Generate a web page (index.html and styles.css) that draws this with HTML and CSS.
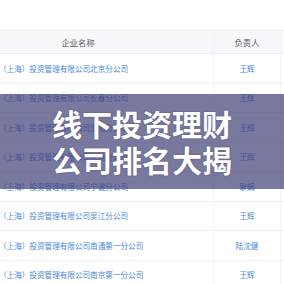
FILE: index.html
```html
<!DOCTYPE html>
<html lang="zh">
<head>
    <meta charset="UTF-8">
    <meta name="viewport" content="width=device-width, initial-scale=1.0">
    <title>线下投资理财公司排名大揭</title>
    <link rel="stylesheet" href="styles.css">
</head>
<body>
    <div class="page">
        <div class="toolbar"></div>
        <table class="list">
            <thead>
                <tr>
                    <th class="col-name">企业名称</th>
                    <th class="col-owner">负责人</th>
                    <th class="col-extra"></th>
                </tr>
            </thead>
            <tbody>
                <tr><td class="name">（上海）投资管理有限公司北京分公司</td><td class="owner">王辉</td><td></td></tr>
                <tr><td class="name">（上海）投资管理有限公司长春分公司</td><td class="owner">王辉</td><td></td></tr>
                <tr><td class="name">（上海）投资管理有限公司沈阳分公司</td><td class="owner">王辉</td><td></td></tr>
                <tr><td class="name">（上海）投资管理有限公司大连分公司</td><td class="owner">王辉</td><td></td></tr>
                <tr><td class="name">（上海）投资管理有限公司宁波分公司</td><td class="owner">耿娟</td><td></td></tr>
                <tr><td class="name">（上海）投资管理有限公司吴江分公司</td><td class="owner">王辉</td><td></td></tr>
                <tr><td class="name">（上海）投资管理有限公司南通第一分公司</td><td class="owner">陆沈健</td><td></td></tr>
                <tr><td class="name">（上海）投资管理有限公司南京第一分公司</td><td class="owner">王辉</td><td></td></tr>
            </tbody>
        </table>

        <!-- title banner over the list -->
        <div class="banner">
            <h1>线下投资理财<br>公司排名大揭</h1>
        </div>
    </div>
</body>
</html>
```

FILE: styles.css
```css
body {
    margin: 0;
    background-color: #fff;
    font-family: "Noto Sans CJK SC", "Noto Sans", sans-serif;
    overflow: hidden;
}
.page {
    position: relative;
    width: 284px;
    height: 284px;
    overflow: hidden;
}
.toolbar {
    height: 30px;
    border-bottom: 1px solid #eef0f4;
}
.list {
    margin-left: -57px;
    border-collapse: collapse;
    table-layout: fixed;
    width: 400px;
    font-size: 7.6px;
}
.col-name {
    width: 270px;
}
.col-owner {
    width: 66px;
}
th, td {
    border-bottom: 1px solid #edf0f5;
    border-right: 1px solid #f1f3f7;
    padding: 0;
    text-align: center;
    white-space: nowrap;
}
th {
    height: 22px;
    background-color: #f6f8fb;
    color: #555a63;
    font-size: 8.3px;
    font-weight: normal;
}
td {
    height: 28.5px;
}
td.name {
    text-align: left;
    padding-left: 56px;
    color: #4a86d8;
}
td.owner {
    color: #4a86d8;
}
.banner {
    position: absolute;
    left: 0;
    top: 94px;
    width: 284px;
    height: 95px;
    background-color: rgba(64, 62, 118, 0.7);
    display: flex;
    align-items: center;
    justify-content: center;
}
.banner h1 {
    margin: 0;
    color: #fff;
    font-size: 30px;
    font-weight: bold;
    line-height: 35.5px;
    text-align: center;
    text-shadow: 0 0 2px rgba(40, 40, 80, 0.4);
}
```
